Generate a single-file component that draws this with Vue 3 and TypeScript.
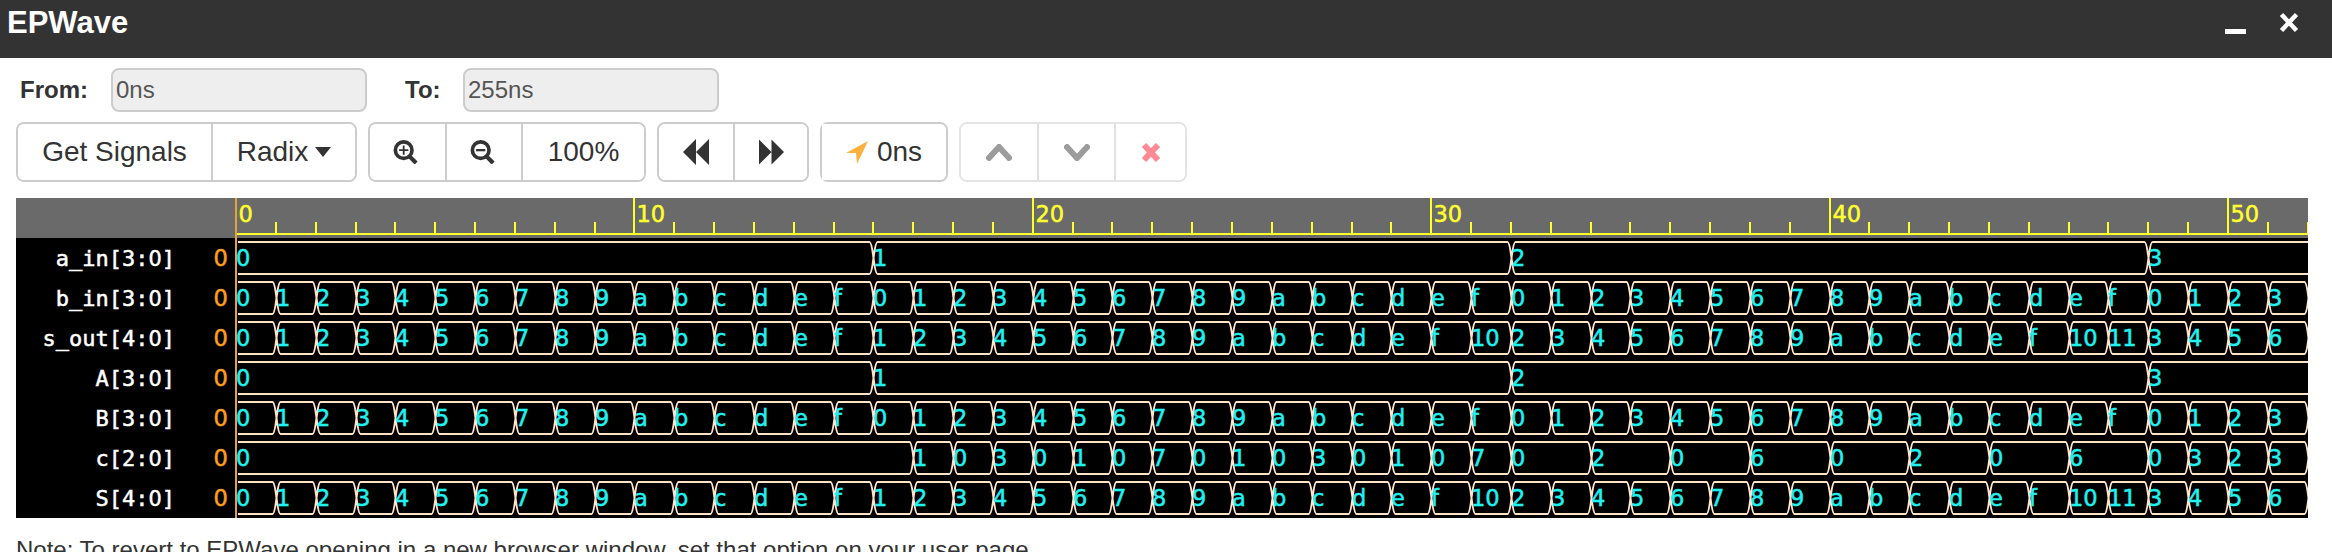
<template>
  <div class="page">
    <header class="title-bar">
      <span class="title">EPWave</span>
      <div class="win-btns">
        <svg class="win-min" width="21" height="5" viewBox="0 0 21 5"><rect width="21" height="5" fill="#fff" /></svg>
        <svg class="win-close" width="22" height="21" viewBox="0 0 22 21"><path d="M3.5 2.5 L18.5 18.5 M18.5 2.5 L3.5 18.5" stroke="#fff" stroke-width="4.5" fill="none" /></svg>
      </div>
    </header>

    <div class="range-row">
      <label class="range-label from-label">From:</label>
      <div class="range-input">0ns</div>
      <label class="range-label to-label">To:</label>
      <div class="range-input">255ns</div>
    </div>

    <div class="toolbar">
      <div class="btn-group">
        <button class="btn" style="width: 193px">Get Signals</button>
        <button class="btn" style="width: 144px">Radix<span class="caret"></span></button>
      </div>
      <div class="btn-group">
        <button class="btn lens" style="width: 75px">
          <svg width="26" height="24" viewBox="0 0 28 26"><circle cx="11.5" cy="11" r="9" fill="none" stroke="#333" stroke-width="4" /><path d="M17.5 17.5 L25 25" stroke="#333" stroke-width="4.5" /><path d="M6.5 11 H16.5 M11.5 6 V16" stroke="#333" stroke-width="2" /></svg>
        </button>
        <button class="btn lens" style="width: 76px">
          <svg width="26" height="24" viewBox="0 0 28 26"><circle cx="11.5" cy="11" r="9" fill="none" stroke="#333" stroke-width="4" /><path d="M17.5 17.5 L25 25" stroke="#333" stroke-width="4.5" /><path d="M6.5 11 H16.5" stroke="#333" stroke-width="2.5" /></svg>
        </button>
        <button class="btn" style="width: 123px">100%</button>
      </div>
      <div class="btn-group">
        <button class="btn" style="width: 74px">
          <svg width="26" height="26" viewBox="0 0 26 26"><path d="M13 0 V26 L0 13 Z M26 0 V26 L13 13 Z" fill="#333" /></svg>
        </button>
        <button class="btn" style="width: 74px">
          <svg width="25" height="26" viewBox="0 0 26 26"><path d="M0 0 V26 L13 13 Z M13 0 V26 L26 13 Z" fill="#333" /></svg>
        </button>
      </div>
      <div class="btn-group">
        <button class="btn go-btn" style="width: 124px">
          <svg width="22" height="23" viewBox="0 0 22 23"><path d="M22 0 L11 23 L10 12 L0 12 Z" fill="#fdb23e" /></svg>
          <span>0ns</span>
        </button>
      </div>
      <div class="btn-group disabled">
        <button class="btn" style="width: 76px">
          <svg width="26" height="17" viewBox="0 0 26 17"><path d="M1 16 L13 3 L25 16" fill="none" stroke="#9c9c9c" stroke-width="6" /></svg>
        </button>
        <button class="btn" style="width: 77px">
          <svg width="26" height="17" viewBox="0 0 26 17"><path d="M1 1 L13 14 L25 1" fill="none" stroke="#9c9c9c" stroke-width="6" /></svg>
        </button>
        <button class="btn" style="width: 71px">
          <svg width="20" height="19" viewBox="0 0 20 19"><path d="M3 2 L17 17 M17 2 L3 17" fill="none" stroke="#ff8a93" stroke-width="6" /></svg>
        </button>
      </div>
    </div>

    <svg class="wave" width="2292" height="320" viewBox="16 198 2292 320">
      <rect x="16" y="198" width="2292" height="320" fill="#000" />
      <rect x="16" y="198" width="2292" height="40" fill="#6a6a6a" />
      <path :d="rulerPath" stroke="#ffff2e" stroke-width="2" fill="none" />
      <rect x="236" y="233" width="2072" height="2" fill="#ffff2e" />
      <text v-for="m in majors" :key="m.label" :x="m.x + 2.5" y="221.5" class="plain ruler-label">{{ m.label }}</text>
      <rect x="235" y="198" width="2" height="320" fill="#e3a23a" />

      <g v-for="row in rows" :key="row.name">
        <text x="175" :y="row.top + 25" text-anchor="end" class="mono sig-name">{{ row.name.slice(0, -2) }}<tspan class="name-zero">0</tspan>]</text>
        <text x="213.5" :y="row.top + 25" class="plain sig-now">0</text>
        <path :d="row.path" stroke="#ffe4c8" stroke-width="2" fill="none" />
        <text v-for="seg in row.segs" :key="seg.x" :x="seg.x" :y="row.top + 25" class="plain sig-val">{{ seg.v }}</text>
      </g>
    </svg>

    <p class="note">Note: To revert to EPWave opening in a new browser window, set that option on your user page.</p>
  </div>
</template>

<script setup lang="ts">
const X0 = 236
const UNIT = 39.84
const END = 2308
const TOTAL = 52

interface Seg { x: number; v: string }

const xAt = (t: number) => Math.round(X0 + t * UNIT)

const aVals = (t: number) => Math.floor(t / 16)
const bVals = (t: number) => t % 16
const sVals = (t: number) => aVals(t) + bVals(t)

// carry bits from the ripple adder, one entry per step from 17 on
const cTail = [1, 0, 3, 0, 1, 0, 7, 0, 1, 0, 3, 0, 1, 0, 7, 0, 0, 2, 2, 0, 0, 6, 6, 0, 0, 2, 2, 0, 0, 6, 6, 0, 3, 2, 3, 0]
const cVals = (t: number) => (t < 17 ? 0 : cTail[t - 17])

function makeRow(name: string, top: number, fn: (t: number) => number) {
  const segs: Seg[] = []
  let last = -1
  for (let t = 0; t < TOTAL; t++) {
    const v = fn(t)
    if (v !== last) {
      segs.push({ x: xAt(t), v: v.toString(16) })
      last = v
    }
  }
  // a lane that carries on past the right edge stays open
  const openEnd = fn(TOTAL) === last
  const y1 = top + 1
  const y2 = top + 33
  const mid = top + 17
  let d = ''
  segs.forEach((seg, i) => {
    const isLast = i === segs.length - 1
    const next = (isLast ? xAt(TOTAL) : segs[i + 1].x) + 0.5
    const c = seg.x + 0.5
    const head = i === 0 ? `M238 ${y1}` : `M${c} ${mid} Q${c + 2} ${y1} ${c + 4} ${y1}`
    const back = i === 0 ? 'H238' : `H${c + 4} Q${c + 2} ${y2} ${c} ${mid}`
    if (isLast && openEnd) {
      d += `${head} H${END} M${END} ${y2} ${back} `
    } else {
      // neighbouring lanes cross at mid height, so the edges form a narrow X
      d += `${head} H${next - 4} Q${next - 2} ${y1} ${next} ${mid} Q${next - 2} ${y2} ${next - 4} ${y2} ${back} `
    }
  })
  return { name, top, segs, path: d }
}

const rows = [
  makeRow('a_in[3:0]', 241, aVals),
  makeRow('b_in[3:0]', 281, bVals),
  makeRow('s_out[4:0]', 321, sVals),
  makeRow('A[3:0]', 361, aVals),
  makeRow('B[3:0]', 401, bVals),
  makeRow('c[2:0]', 441, cVals),
  makeRow('S[4:0]', 481, sVals),
]

const majors = [0, 10, 20, 30, 40, 50].map((n) => ({ label: String(n), x: xAt(n) }))

let rulerPath = ''
for (let t = 0; t <= TOTAL; t++) {
  const x = xAt(t)
  rulerPath += t % 10 === 0 ? `M${x} 198 V234 ` : `M${x} 222 V234 `
}
</script>

<style scoped>
.page {
  width: 2332px;
  font-family: "Liberation Sans", Arial, sans-serif;
  color: #333;
}

.title-bar {
  height: 58px;
  background: #333;
  display: flex;
  justify-content: space-between;
  padding: 0 32px 0 7px;
  box-sizing: border-box;
}

.title {
  color: #fff;
  font-size: 31px;
  font-weight: 700;
  line-height: 45px;
}

.win-btns {
  display: flex;
  gap: 32px;
}

.win-min {
  margin-top: 29px;
  filter: blur(0.4px);
}

.win-close {
  margin-top: 12px;
  filter: blur(0.6px);
}

.range-row {
  display: flex;
  align-items: center;
  height: 44px;
  margin-top: 10px;
  padding-left: 20px;
}

.range-label {
  font-size: 24px;
  font-weight: 700;
}

.from-label {
  width: 91px;
}

.to-label {
  width: 58px;
  margin-left: 38px;
}

.range-input {
  width: 256px;
  height: 44px;
  box-sizing: border-box;
  background: #eee;
  border: 2px solid #ccc;
  border-radius: 8px;
  color: #555;
  font-size: 24px;
  line-height: 40px;
  padding-left: 3px;
}

.toolbar {
  display: flex;
  gap: 11px;
  margin-top: 10px;
  padding-left: 16px;
}

.btn-group {
  display: flex;
  height: 60px;
  box-sizing: border-box;
  border: 2px solid #ccc;
  border-radius: 8px;
}

.btn {
  height: 56px;
  box-sizing: border-box;
  margin: 0;
  padding: 0;
  border: 0;
  border-left: 2px solid #ccc;
  background: #fff;
  color: #333;
  font-family: inherit;
  font-size: 28px;
  display: flex;
  align-items: center;
  justify-content: center;
}

.btn:first-child {
  border-left: 0;
  border-radius: 6px 0 0 6px;
}

.btn:last-child {
  border-radius: 0 6px 6px 0;
}

.lens {
  padding-right: 3px;
}

.caret {
  width: 0;
  height: 0;
  margin-left: 7px;
  border-top: 10px solid #333;
  border-left: 8px solid transparent;
  border-right: 8px solid transparent;
}

.go-btn {
  gap: 9px;
}

.disabled {
  border-color: #e4e4e4;
}

.disabled .btn {
  border-left-color: #e0e0e0;
}

.disabled .btn:first-child {
  border-left: 0;
}

.wave {
  display: block;
  margin: 16px 0 0 16px;
}

.mono {
  font-family: "DejaVu Sans Mono", "Liberation Mono", monospace;
  font-size: 22px;
  stroke-width: 0.5px;
}

/* the zero in the reference has no dot, so digits come from the proportional face */
.plain {
  font-family: "DejaVu Sans", "Liberation Sans", sans-serif;
  font-size: 22.5px;
  stroke-width: 0.5px;
}

.name-zero {
  font-family: "DejaVu Sans", "Liberation Sans", sans-serif;
  font-size: 20.8px;
}

.ruler-label {
  fill: #ffff2e;
  stroke: #ffff2e;
}

.sig-name {
  fill: #fff;
  stroke: #fff;
}

.sig-now {
  fill: #ff9f1c;
  stroke: #ff9f1c;
}

.sig-val {
  fill: #1ff2f2;
  stroke: #1ff2f2;
}

.note {
  margin: 18px 0 0 16px;
  font-size: 24px;
  white-space: nowrap;
}
</style>

<style>
html,
body {
  margin: 0;
  height: 552px;
  overflow: hidden;
  background: #fff;
}
</style>
